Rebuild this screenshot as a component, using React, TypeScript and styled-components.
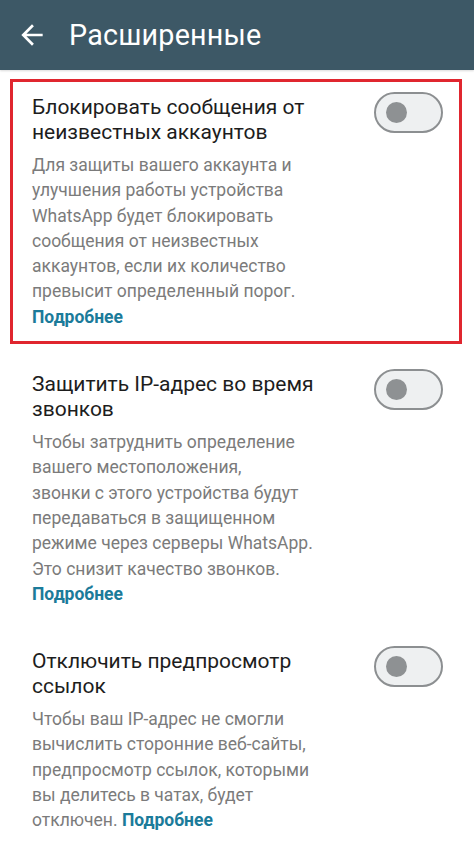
import React from "react"
import styled, { createGlobalStyle } from "styled-components"

const GlobalStyle = createGlobalStyle`
  html, body {
    margin: 0;
    padding: 0;
    background: #ffffff;
    font-family: Roboto, "Noto Sans", "Liberation Sans", sans-serif;
  }
`

const Screen = styled.div`
  width: 474px;
  min-height: 856px;
  background: #ffffff;
  display: flex;
  flex-direction: column;
`

const Toolbar = styled.header`
  height: 70px;
  background: #3d5866;
  display: flex;
  align-items: center;
  padding-left: 16px;
  gap: 21px;
  box-shadow: 0 1px 2px rgba(0, 0, 0, 0.15);
`

const BackButton = styled.button`
  width: 32px;
  height: 32px;
  padding: 0;
  border: none;
  background: none;
  display: flex;
  align-items: center;
  justify-content: center;
  color: #ffffff;
`

const ToolbarTitle = styled.h1`
  margin: 0;
  font-size: 28.7px;
  font-weight: 400;
  color: #ffffff;
  letter-spacing: 0.2px;
`

const List = styled.main`
  display: flex;
  flex-direction: column;
  padding: 9px 12px 0 10px;
  gap: 12px;
`

interface ItemProps {
  $highlighted?: boolean
}

const Item = styled.section<ItemProps>`
  display: flex;
  flex-direction: row;
  align-items: flex-start;
  gap: 16px;
  border: 3px solid ${props => props.$highlighted ? "#e0262f" : "transparent"};
  padding: 13px 16px 11px 19px;
`

const TextColumn = styled.div`
  flex-grow: 1;
  display: flex;
  flex-direction: column;
`

const ItemTitle = styled.div`
  font-size: 21px;
  line-height: 25px;
  color: #1d1d1d;
`

const ItemDescription = styled.p`
  margin: 8px 0 0 0;
  font-size: 17.5px;
  line-height: 25.3px;
  color: #7b7b7b;
`

const MoreLink = styled.a`
  color: #1b7b9a;
  font-weight: 700;
  text-decoration: none;
`

const SwitchTrack = styled.div`
  flex-shrink: 0;
  margin-top: -3px;
  width: 69px;
  height: 41px;
  box-sizing: border-box;
  border: 2.5px solid #8c8f91;
  border-radius: 21px;
  background: #eef0f1;
  display: flex;
  align-items: center;
  padding-left: 10px;
`

const SwitchKnob = styled.div`
  width: 21px;
  height: 21px;
  border-radius: 50%;
  background: #8e9193;
`

type Setting = {
  title: string[]
  description: string[]
  linkInline?: boolean
  highlighted?: boolean
}

const settings: Setting[] = [
  {
    title: ["Блокировать сообщения от", "неизвестных аккаунтов"],
    description: [
      "Для защиты вашего аккаунта и",
      "улучшения работы устройства",
      "WhatsApp будет блокировать",
      "сообщения от неизвестных",
      "аккаунтов, если их количество",
      "превысит определенный порог.",
    ],
    highlighted: true,
  },
  {
    title: ["Защитить IP-адрес во время", "звонков"],
    description: [
      "Чтобы затруднить определение",
      "вашего местоположения,",
      "звонки с этого устройства будут",
      "передаваться в защищенном",
      "режиме через серверы WhatsApp.",
      "Это снизит качество звонков.",
    ],
  },
  {
    title: ["Отключить предпросмотр", "ссылок"],
    description: [
      "Чтобы ваш IP-адрес не смогли",
      "вычислить сторонние веб-сайты,",
      "предпросмотр ссылок, которыми",
      "вы делитесь в чатах, будет",
      "отключен.",
    ],
    linkInline: true,
  },
]

function BackArrow() {
  return (
    <svg width="32" height="32" viewBox="0 0 24 24" fill="currentColor">
      <path d="M20 11H7.83l5.59-5.59L12 4l-8 8 8 8 1.41-1.41L7.83 13H20v-2z" />
    </svg>
  )
}

function Lines({ lines }: { lines: string[] }) {
  return (
    <>
      {lines.map((line, i) => (
        <React.Fragment key={i}>
          {line}
          {i < lines.length - 1 && <br />}
        </React.Fragment>
      ))}
    </>
  )
}

function SettingItem(props: Setting) {
  return (
    <Item $highlighted={props.highlighted}>
      <TextColumn>
        <ItemTitle>
          <Lines lines={props.title} />
        </ItemTitle>
        <ItemDescription>
          <Lines lines={props.description} />
          {props.linkInline ? " " : <br />}
          <MoreLink href="#">Подробнее</MoreLink>
        </ItemDescription>
      </TextColumn>
      <SwitchTrack>
        <SwitchKnob />
      </SwitchTrack>
    </Item>
  )
}

export default function App() {
  return (
    <>
      <GlobalStyle />
      <Screen>
        <Toolbar>
          <BackButton aria-label="Назад">
            <BackArrow />
          </BackButton>
          <ToolbarTitle>Расширенные</ToolbarTitle>
        </Toolbar>
        <List>
          {settings.map((s, i) => (
            <SettingItem key={i} {...s} />
          ))}
        </List>
      </Screen>
    </>
  )
}
